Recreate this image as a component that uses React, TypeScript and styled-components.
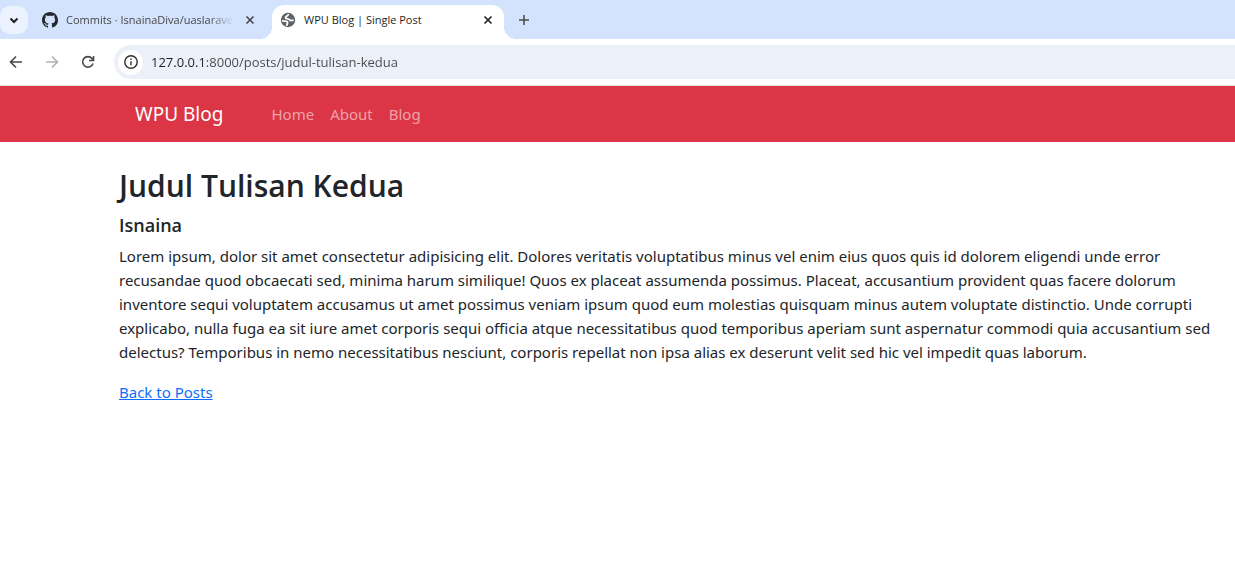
import React from "react";
import styled, { createGlobalStyle } from "styled-components";

const uiFont = `"Segoe UI", "Open Sans", "Liberation Sans", sans-serif`;
const pageFont = `"Segoe UI", "Noto Sans", "Liberation Sans", sans-serif`;

const GlobalStyle = createGlobalStyle`
  *, *::before, *::after { box-sizing: border-box; }
  body { margin: 0; background: #fff; color: #212529; font-family: ${pageFont}; font-size: 15px; line-height: 24px; }
  button, input { font: inherit; color: inherit; }
`;

const Window = styled.div`
  display: flex;
  flex-direction: column;
  min-height: 100vh;
  overflow-x: hidden;
`;

const TabStrip = styled.header`
  display: flex;
  align-items: flex-end;
  height: 39px;
  background: #d3e3fd;
  font-family: ${uiFont};
  font-size: 11px;
  line-height: 16px;
`;

const IconButton = styled.button`
  display: grid;
  place-items: center;
  flex: none;
  width: 28px;
  height: 28px;
  padding: 0;
  border: 0;
  border-radius: 10px;
  background: transparent;
  color: #474747;
`;

const TabSearch = styled(IconButton)`
  align-self: center;
  background: #ecf3fe;
  color: #1f1f1f;
`;

const Tab = styled.div<{ $active?: boolean }>`
  position: relative;
  display: flex;
  align-items: center;
  flex: none;
  width: ${(p) => (p.$active ? 232 : 244)}px;
  height: 34px;
  padding: ${(p) => (p.$active ? "0 8px 5px" : "0 14px 5px")};
  border-radius: 12px 12px 0 0;
  background: ${(p) => (p.$active ? "#fff" : "transparent")};
  color: ${(p) => (p.$active ? "#1f1f1f" : "#474747")};

  &::before, &::after {
    content: "";
    display: ${(p) => (p.$active ? "block" : "none")};
    position: absolute;
    bottom: 0;
    width: 12px;
    height: 12px;
  }
  &::before { right: 100%; background: radial-gradient(circle at 0 0, transparent 12px, #fff 12px); }
  &::after { left: 100%; background: radial-gradient(circle at 100% 0, transparent 12px, #fff 12px); }
`;

const TabTitle = styled.span<{ $fade?: boolean }>`
  flex: 1;
  min-width: 0;
  margin: 0 8px;
  overflow: hidden;
  white-space: nowrap;
  ${(p) => p.$fade && "mask-image: linear-gradient(to right, #000 85%, transparent);"}
`;

const CloseButton = styled(IconButton)`
  width: 16px;
  height: 16px;
`;

const NewTab = styled(IconButton)`
  align-self: center;
  margin-left: 6px;
`;

const Toolbar = styled.div`
  display: flex;
  align-items: center;
  gap: 8px;
  height: 47px;
  padding-left: 2px;
  border-bottom: 1px solid #e0e2e0;
`;

const AddressBar = styled.form`
  display: flex;
  align-items: center;
  flex: 1;
  height: 34px;
  margin-left: 4px;
  padding-left: 4px;
  border-radius: 17px 0 0 17px;
  background: #ecf0f9;
`;

const SiteInfo = styled(IconButton)`
  width: 25px;
  height: 25px;
  border-radius: 50%;
  background: #fff;
`;

const UrlInput = styled.input`
  flex: 1;
  min-width: 0;
  margin-left: 8px;
  padding: 0;
  border: 0;
  outline: 0;
  background: linear-gradient(to right, #1f1f1f 4em, #474747 4em);
  background-clip: text;
  color: transparent;
  caret-color: #1f1f1f;
  font-family: ${uiFont};
  font-size: 13px;
  line-height: 20px;
`;

const Navbar = styled.nav`
  display: flex;
  align-items: center;
  height: 56px;
  padding-left: 135px;
  background: #dc3545;
`;

const Brand = styled.a`
  margin-right: 40px;
  color: #fff;
  font-size: 19px;
  line-height: 30px;
  text-decoration: none;
`;

const NavLink = styled.a`
  padding: 8px;
  color: rgba(255, 255, 255, 0.55);
  text-decoration: none;
`;

const Post = styled.main`
  padding: 25px 12px 0 119px;
`;

const Title = styled.h2`
  margin: 0 0 8px;
  font-family: "Segoe UI Semibold", "Open Sans", sans-serif;
  font-size: 30px;
  font-weight: 600;
  line-height: 38px;
`;

const Author = styled.h5`
  margin: 0 0 7px;
  font-family: "Segoe UI Semibold", "Open Sans", sans-serif;
  font-size: 18px;
  font-weight: 600;
  line-height: 24px;
`;

const Body = styled.p`
  margin: 0 0 16px;
`;

const BackLink = styled.a`
  color: #0d6efd;
`;

const Stroke = ({ d, size = 16, width = 2, color = "currentColor" }: { d: string; size?: number; width?: number; color?: string }) => (
  <svg width={size} height={size} viewBox="0 0 16 16" fill="none" stroke={color} strokeWidth={width} aria-hidden="true">
    <path d={d} />
  </svg>
);

const GithubIcon = () => (
  <svg width="16" height="16" viewBox="0 0 16 16" fill="#24292f" aria-hidden="true">
    <path d="M8 0C3.58 0 0 3.58 0 8c0 3.54 2.29 6.53 5.47 7.59.4.07.55-.17.55-.38 0-.19-.01-.82-.01-1.49-2.01.37-2.53-.49-2.69-.94-.09-.23-.48-.94-.82-1.13-.28-.15-.68-.52-.01-.53.63-.01 1.08.58 1.23.82.72 1.21 1.87.87 2.33.66.07-.52.28-.87.51-1.07-1.78-.2-3.64-.89-3.64-3.95 0-.87.31-1.59.82-2.15-.08-.2-.36-1.02.08-2.12 0 0 .67-.21 2.2.82.64-.18 1.32-.27 2-.27.68 0 1.36.09 2 .27 1.53-1.04 2.2-.82 2.2-.82.44 1.1.16 1.92.08 2.12.51.56.82 1.27.82 2.15 0 3.07-1.87 3.75-3.65 3.95.29.25.54.73.54 1.48 0 1.07-.01 1.93-.01 2.2 0 .21.15.46.55.38A8.013 8.013 0 0016 8c0-4.42-3.58-8-8-8z" />
  </svg>
);

const GlobeIcon = () => (
  <svg width="16" height="16" viewBox="0 0 16 16" aria-hidden="true">
    <circle cx="8" cy="8" r="7.200" fill="#5f6368" />
    <path d="M8.500 2.200C8.300 4 5.800 3.800 5.500 5.500c-.2 1.800 4.500.8 4.500 2.800h3.600M2 8.800c1.800 0 4.800-.2 5.500 1.200.5 1.200-.6 2-.8 3.800" fill="none" stroke="#fff" strokeWidth="1.700" />
  </svg>
);

const InfoIcon = () => (
  <svg width="16" height="16" viewBox="0 0 16 16" fill="none" stroke="#2f2f2f" strokeWidth="1.400" aria-hidden="true">
    <circle cx="8" cy="8" r="6.200" />
    <path d="M8 7.200v4M8 4.600v1.500" />
  </svg>
);

const close = "M4.500 4.500l7 7M11.500 4.500l-7 7";

export default function App() {
  return (
    <Window>
      <GlobalStyle />
      <TabStrip>
        <TabSearch aria-label="Search tabs"><Stroke d="M4.500 6.500L8 10l3.500-3.500" /></TabSearch>
        <Tab>
          <GithubIcon />
          <TabTitle $fade>Commits · IsnainaDiva/uaslarave</TabTitle>
          <CloseButton aria-label="Close tab"><Stroke d={close} width={1.6} /></CloseButton>
        </Tab>
        <Tab $active>
          <GlobeIcon />
          <TabTitle>WPU Blog | Single Post</TabTitle>
          <CloseButton aria-label="Close tab"><Stroke d={close} width={1.6} color="#1f1f1f" /></CloseButton>
        </Tab>
        <NewTab aria-label="New tab"><Stroke d="M8 3v10M3 8h10" width={1.5} /></NewTab>
      </TabStrip>
      <Toolbar>
        <IconButton aria-label="Back"><Stroke d="M14 8H3M8 2.500L2.500 8L8 13.500" width={1.6} /></IconButton>
        <IconButton aria-label="Forward" disabled><Stroke d="M2 8h11M8 2.500L13.500 8L8 13.500" width={1.6} color="#b0b0b0" /></IconButton>
        <IconButton aria-label="Reload"><Stroke d="M13 9.500A5.300 5.300 0 1 1 12 4.500L13.300 6M13.500 2v4.500H9" width={1.6} /></IconButton>
        <AddressBar>
          <SiteInfo type="button" aria-label="View site information"><InfoIcon /></SiteInfo>
          <UrlInput aria-label="Address" defaultValue="127.0.0.1:8000/posts/judul-tulisan-kedua" />
        </AddressBar>
      </Toolbar>
      <Navbar>
        <Brand href="#">WPU Blog</Brand>
        <NavLink href="#home">Home</NavLink>
        <NavLink href="#about">About</NavLink>
        <NavLink href="#blog">Blog</NavLink>
      </Navbar>
      <Post>
        <Title>Judul Tulisan Kedua</Title>
        <Author>Isnaina</Author>
        <Body>
          Lorem ipsum, dolor sit amet consectetur adipisicing elit. Dolores veritatis voluptatibus minus vel enim eius quos quis id dolorem eligendi unde error recusandae quod obcaecati sed, minima harum similique! Quos ex placeat assumenda possimus. Placeat, accusantium provident quas facere dolorum inventore sequi voluptatem accusamus ut amet possimus veniam ipsum quod eum molestias quisquam minus autem voluptate distinctio. Unde corrupti explicabo, nulla fuga ea sit iure amet corporis sequi officia atque necessitatibus quod temporibus aperiam sunt aspernatur commodi quia accusantium sed delectus? Temporibus in nemo necessitatibus nesciunt, corporis repellat non ipsa alias ex deserunt velit sed hic vel impedit quas laborum.
        </Body>
        <BackLink href="#posts">Back to Posts</BackLink>
      </Post>
    </Window>
  );
}
